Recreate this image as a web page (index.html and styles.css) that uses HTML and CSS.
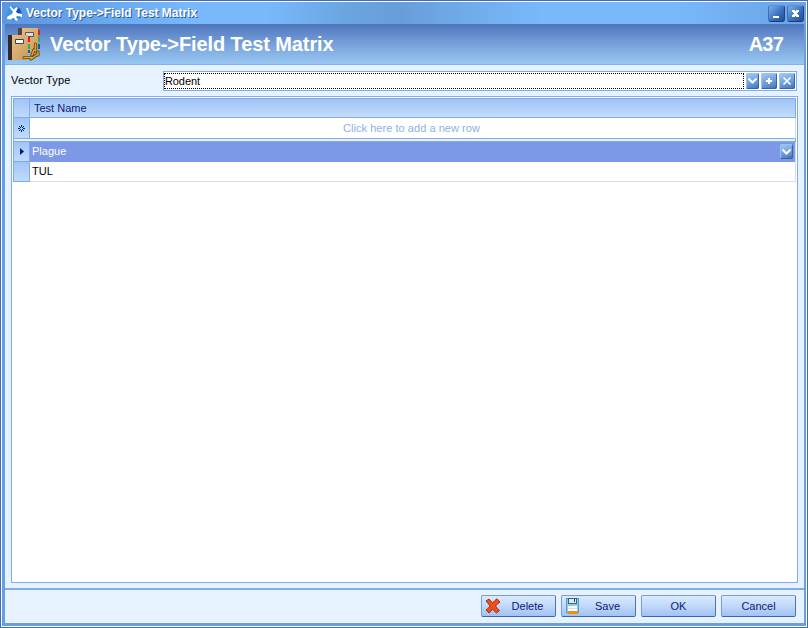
FILE: index.html
```html
<!DOCTYPE html>
<html lang="en">
<head>
<meta charset="utf-8">
<title>Vector Type-&gt;Field Test Matrix</title>
<link rel="stylesheet" href="styles.css">
</head>
<body>
<div class="window">
  <div class="frame">
    <header class="titlebar">
      <svg class="app-icon" width="17" height="17" viewBox="0 0 17 17">
        <circle cx="8" cy="8.500" r="7.500" fill="#3d97e0"/>
        <path d="M10 1.500a7.500 7.500 0 0 1 4 11.500l-5-4z" fill="#1257b4"/>
        <path d="M4.500 1l3 3.500L10.500 2l1.500 1-2 3.500 1 1.500 5 1v3l-5-1-1 1 2 3-2 1-2.500-3.500L5 14.500 1 14l.500-2.500L6 9l1-2-3.500-5z" fill="#fff"/>
      </svg>
      <span class="caption">Vector Type-&gt;Field Test Matrix</span>
      <button class="win-btn" aria-label="Minimize"><svg width="15" height="15" viewBox="0 0 15 15"><path d="M4 10h6v2H4z" fill="#fff"/></svg></button>
      <button class="win-btn" aria-label="Close"><svg width="15" height="15" viewBox="0 0 15 15" shape-rendering="crispEdges"><path d="M4 4h3v1h1v-1h3v2h-1v1H9v1h1v1h1v2H8v-1H7v1H4V9h1V8h1V7H5V6H4z" fill="#fff"/></svg></button>
    </header>
    <div class="banner">
      <svg class="book-icon" width="34" height="33" viewBox="0 0 34 33">
        <defs><linearGradient id="cover" x2="1" y2="1"><stop stop-color="#e5bd82"/><stop offset="1" stop-color="#c99c60"/></linearGradient></defs>
        <path d="M10 0h4v25h-4z" fill="#5a4238"/>
        <path d="M14 0h16v25H14z" fill="url(#cover)"/>
        <path d="M30 2h2v5h-2z" fill="#ed1818"/><path d="M30 9h2v5h-2z" fill="#38ae48"/><path d="M30 16h2v5h-2z" fill="#125da8"/>
        <path d="M17.500 4.500h8v4h-8z" fill="#ddd" stroke="#555"/>
        <path d="M0 7h4v25H0z" fill="#34282a"/>
        <path d="M4 7h16v25H4z" fill="url(#cover)"/>
        <path d="M20 9h2v5h-2z" fill="#ed1818"/><path d="M20 16h2v5h-2z" fill="#38ae48"/><path d="M20 22h2v3h-2z" fill="#125da8"/>
        <path d="M7.500 11.500h8v4h-8z" fill="#fff" stroke="#444"/>
        <path d="M16 29.500h8M23 31l7-5M27.500 16v7M24 27l2-5M30 24v3" fill="none" stroke="#61401a" stroke-width="3.200" stroke-linecap="round"/>
        <path d="M16 29.500h8M23 31l7-5M27.500 16v7M24 27l2-5M30 24v3" fill="none" stroke="#e7aa29" stroke-width="1.500" stroke-linecap="round"/>
      </svg>
      <h1>Vector Type-&gt;Field Test Matrix</h1>
      <span class="code">A37</span>
    </div>
    <main class="content">
      <div class="field">
        <label>Vector Type</label>
        <div class="combo">
          <div class="combo-value">Rodent</div>
          <button class="mini drop" aria-label="Open"><svg width="13" height="16" viewBox="0 0 13 16"><path d="M2.500 5.500l4 4 4-4" class="glyph"/></svg></button>
          <button class="mini" aria-label="Add"><svg width="16" height="16" viewBox="0 0 16 16"><path d="M5 8h6M8 5v6" class="glyph"/></svg></button>
          <button class="mini" aria-label="Clear"><svg width="16" height="16" viewBox="0 0 16 16"><path d="M4.500 4.500l7 7M11.500 4.500l-7 7" class="glyph thin"/></svg></button>
        </div>
      </div>
      <section class="grid">
        <div class="rows">
          <div class="row head"><div class="ind"></div><div class="cell">Test Name</div></div>
          <div class="row new"><div class="ind"><svg width="7" height="7" viewBox="0 0 7 7" shape-rendering="crispEdges"><path d="M3 0h1v2H3zM3 5h1v2H3zM0 3h2v1H0zM5 3h2v1H5zM1 1h1v1H1zM5 1h1v1H5zM1 5h1v1H1zM5 5h1v1H5zM2 2h1v1H2zM4 2h1v1H4zM2 4h1v1H2zM4 4h1v1H4z" fill="#0a246a"/></svg></div><div class="cell">Click here to add a new row</div></div>
          <div class="separator"></div>
          <div class="row selected"><div class="ind"><svg width="4" height="7" viewBox="0 0 4 7"><path d="M0 0l4 3.500L0 7z" fill="#06187c"/></svg></div><div class="cell"><span>Plague</span><i class="mini row-drop"><svg width="13" height="15" viewBox="0 0 13 15"><path d="M2.500 5.500l4 4 4-4" class="glyph"/></svg></i></div></div>
          <div class="row last"><div class="ind"></div><div class="cell">TUL</div></div>
        </div>
      </section>
    </main>
    <footer class="actions">
      <button class="btn with-icon">
        <svg width="16" height="16" viewBox="0 0 16 16"><path d="M1 3l3-2q2 2 3.500 4Q10 2 12 .800L15 4q-3 2-4.500 4 2 3 4 4.500L11.500 15Q9 13 7.500 11 6 13.500 4 15l-3-3q3-2 4-4Q3 5 1 3z" fill="#f04c1c" stroke="#a4300f"/></svg>
        <span>Delete</span>
      </button>
      <button class="btn with-icon">
        <svg width="16" height="16" viewBox="0 0 16 16" shape-rendering="crispEdges"><path d="M1 0h13v15H1z" fill="#5c9cc8"/><path d="M2 1h11v13H2z" fill="#8ecbf0"/><path d="M3 0h9v6H3z" fill="#35647e"/><path d="M4 1h7v4H4z" fill="#dceaf0"/><path d="M9 1h1v3H9z" fill="#234456"/><path d="M3 8h9v5H3z" fill="#fff"/><path d="M3 10h9v1H3z" fill="#d3dde4"/><path d="M3 13h10v3H3z" fill="#f88b08"/></svg>
        <span>Save</span>
      </button>
      <button class="btn"><span>OK</span></button>
      <button class="btn"><span>Cancel</span></button>
    </footer>
  </div>
</div>
</body>
</html>
```
FILE: styles.css
```css
* { box-sizing: border-box; }
body {
  margin: 0;
  font: 11px/13px "Liberation Sans", Arial, sans-serif;
  color: #000;
}
button { font: inherit; padding: 0; margin: 0; }
svg { display: block; flex: none; }
.window {
  width: 808px;
  height: 628px;
  border: 1px solid #426bb9;
  background: #fff;
  padding: 1px;
}
.frame {
  height: 624px;
  display: flex;
  flex-direction: column;
  background: #6a9fdf;
  padding: 0 2px 3px 3px;
}
.titlebar {
  height: 22px;
  flex: none;
  margin: 0 -2px 0 -3px;
  padding: 0 2px 0 4px;
  display: flex;
  align-items: center;
  background: linear-gradient(90deg, #5f95df 0, #66a4ea 80px, #78b8fb 190px, #78b8fb 265px, #6aa5e0 345px, #689dda 400px, #6fabe8 460px, #78b8fb 540px, #78b8fb 670px, #6aa4e5 803px);
}
.caption {
  margin-left: 3px;
  flex: 1;
  color: #fff;
  font-size: 12px;
  font-weight: bold;
  letter-spacing: -.03px;
  white-space: nowrap;
  text-shadow: 1px 1px #2859a8;
}
.win-btn {
  width: 17px;
  height: 17px;
  margin-left: 2px;
  border: 1px solid;
  border-color: #5b8ed4 #1c4590 #17397e #3c70bd;
  border-radius: 3px;
  background: linear-gradient(135deg, #79b0ea, #3568b4 65%, #234f9e);
}
.banner {
  height: 41px;
  flex: none;
  display: flex;
  align-items: center;
  padding: 0 21px 0 3px;
  border-bottom: 1px solid #82b2ec;
  background: linear-gradient(#4e76bd, #77a0da 50%, #99c8f3);
  color: #fff;
  font-weight: bold;
  font-size: 20px;
}
.banner h1 { flex: 1; margin: 0 0 0 8px; font-size: 20px; line-height: 24px; letter-spacing: -.1px; }
.code { letter-spacing: -.8px; }
.content {
  flex: 1;
  display: flex;
  flex-direction: column;
  padding: 6px 6px 5px;
  background: #e6f2ff;
}
.field { display: flex; height: 20px; }
.field label { width: 152px; padding-top: 3px; letter-spacing: .15px; }
.combo {
  flex: 1;
  display: flex;
  gap: 2px;
  border: 1px solid #82aaf0;
  background: #fff;
  padding: 1px 1px 1px 0;
  margin-right: 1px;
}
.combo-value { flex: 1; border: 1px dotted #000; line-height: 14px; letter-spacing: -.1px; }
.mini {
  width: 16px;
  height: 16px;
  flex: none;
  border: 0;
  border-radius: 2px;
  display: flex;
  align-items: center;
  justify-content: center;
  background: linear-gradient(160deg, #a9cdf6, #6e9edb 55%, #3f6fb8);
  box-shadow: inset -1px -1px #38639f, inset 1px 1px #9cc2ef;
}
.drop { width: 13px; }
.glyph { fill: none; stroke: #fff; stroke-width: 2; }
.thin { stroke-width: 1.6; }
.grid {
  flex: 1;
  margin-top: 5px;
  border: 1px solid #82aaf0;
  background: #fff;
  padding: 1px 0 0 1px;
}
.rows { width: 783px; border: solid #82aaea; border-width: 1px 0 0 1px; }
.row { display: flex; height: 20px; }
.ind {
  width: 16px;
  flex: none;
  display: flex;
  align-items: center;
  justify-content: center;
  border-right: 1px solid #82aaea;
  border-bottom: 1px solid #82aaea;
  background: linear-gradient(#a0c5f5, #bfdbfa);
}
.cell { flex: 1; padding-left: 2px; line-height: 19px; border-right: 1px solid #d2def5; }
.head { height: 19px; }
.head .cell {
  padding-left: 4px;
  color: #0a1b78;
  line-height: 18px;
  border-bottom: 1px solid #82aaea;
  border-right: 1px solid #82aaea;
  background: linear-gradient(#9dc3f4, #c3ddfb);
}
.new { height: 21px; }
.new .ind { padding-right: 1px; }
.new .cell { color: #8db0e5; text-align: center; padding: 1px 2px 0 0; border-bottom: 1px solid #82aaea; letter-spacing: .04px; }
.separator { height: 3px; background: #e6f2ff; border-bottom: 1px solid #82aaea; border-right: 1px solid #82aaea; }
.selected .ind { padding-left: 1px; }
.selected .cell {
  display: flex;
  justify-content: space-between;
  padding: 0 2px;
  line-height: 18px;
  color: #fff;
  background: #7c98e6;
}
.row-drop { width: 13px; height: 15px; margin-top: 2px; }
.last .cell { border-bottom: 1px solid #d2def5; }
.actions {
  height: 35px;
  flex: none;
  display: flex;
  justify-content: flex-end;
  gap: 5px;
  padding: 5px 8px 0 0;
  border-top: 2px solid #82aaea;
  background: #e6f2ff;
}
.btn {
  width: 75px;
  height: 22px;
  display: flex;
  align-items: center;
  justify-content: center;
  border: 1px solid;
  border-color: #729fe4 #4d70bd #3f62ae #729fe4;
  border-radius: 2px;
  color: #0a1b78;
  background: linear-gradient(#dcebff, #bdd6fa 55%, #a2c2f2);
}
.with-icon svg { margin-left: 3px; }
.with-icon span { flex: 1; text-align: center; padding-right: 1px; }
```
